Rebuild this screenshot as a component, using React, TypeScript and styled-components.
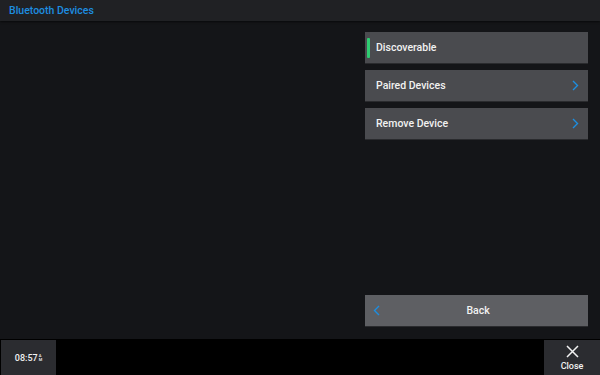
import { FC } from 'react'
import styled, { createGlobalStyle } from 'styled-components'

const colors = {
  header: '#202124',
  body: '#141518',
  footer: '#000000',
  button: '#4a4b4f',
  backButton: '#5e5f63',
  tile: '#2b2c30',
  blue: '#1d8ee0',
  green: '#2ecc71',
  text: '#f2f2f2',
}

const GlobalStyle = createGlobalStyle`
  html, body {
    margin: 0;
    padding: 0;
    background: ${colors.body};
  }
  * {
    box-sizing: border-box;
  }
`

interface MenuItem {
  name: string
  active?: boolean
  chevron?: boolean
}

const items: MenuItem[] = [
  { name: 'Discoverable', active: true },
  { name: 'Paired Devices', chevron: true },
  { name: 'Remove Device', chevron: true },
]

const ChevronRight: FC = () => (
  <svg width="7" height="11" viewBox="0 0 7 11">
    <path d="M1 1 L5.5 5.5 L1 10" fill="none" stroke={colors.blue} strokeWidth="1.4" />
  </svg>
)

const ChevronLeft: FC = () => (
  <svg width="7" height="11" viewBox="0 0 7 11">
    <path d="M6 1 L1.5 5.5 L6 10" fill="none" stroke={colors.blue} strokeWidth="1.4" />
  </svg>
)

const CloseIcon: FC = () => (
  <svg width="13" height="13" viewBox="0 0 13 13">
    <path d="M1 1 L12 12 M12 1 L1 12" stroke="#f2f2f2" strokeWidth="1.5" />
  </svg>
)

const App: FC = () => {
  return (
    <Screen>
      <GlobalStyle />
      <Header>
        <Title>Bluetooth Devices</Title>
      </Header>
      <Main>
        <Panel>
          <Menu>
            {items.map((item) => (
              <MenuButton key={item.name}>
                {item.active && <ActiveBar />}
                <Label>{item.name}</Label>
                {item.chevron && <ChevronRight />}
              </MenuButton>
            ))}
          </Menu>
          <BackButton>
            <ChevronLeft />
            <BackLabel>Back</BackLabel>
          </BackButton>
        </Panel>
      </Main>
      <Footer>
        <TimeTile>
          08:57
          <Meridiem>
            <span>A</span>
            <span>M</span>
          </Meridiem>
        </TimeTile>
        <CloseTile>
          <CloseIcon />
          <CloseText>Close</CloseText>
        </CloseTile>
      </Footer>
    </Screen>
  )
}

const Screen = styled.div`
  width: 600px;
  height: 375px;
  display: flex;
  flex-direction: column;
  background: ${colors.body};
  font-family: Roboto, 'Liberation Sans', sans-serif;
  overflow: hidden;
`

const Header = styled.div`
  height: 21px;
  display: flex;
  align-items: center;
  padding-left: 9px;
  background: ${colors.header};
  box-shadow: 0 1px 2px rgba(0, 0, 0, 0.6);
`

const Title = styled.div`
  color: ${colors.blue};
  font-size: 10.5px;
  font-weight: 500;
`

const Main = styled.div`
  flex: 1;
  display: flex;
  justify-content: flex-end;
  padding: 11px 12px 12px 0;
`

const Panel = styled.div`
  width: 223px;
  display: flex;
  flex-direction: column;
  justify-content: space-between;
`

const Menu = styled.div`
  display: flex;
  flex-direction: column;
  gap: 6px;
`

const MenuButton = styled.div`
  position: relative;
  height: 32px;
  display: flex;
  align-items: center;
  padding: 0 9px 0 11px;
  background: ${colors.button};
  border-bottom: 1px solid #2a2b2e;
`

const ActiveBar = styled.div`
  position: absolute;
  left: 2px;
  top: 6px;
  width: 3px;
  height: 20px;
  border-radius: 1px;
  background: ${colors.green};
`

const Label = styled.div`
  flex: 1;
  color: ${colors.text};
  font-size: 10.5px;
  font-weight: 500;
`

const BackButton = styled.div`
  height: 32px;
  display: flex;
  align-items: center;
  padding: 0 12px 0 8px;
  background: ${colors.backButton};
  border-bottom: 1px solid #2a2b2e;
`

const BackLabel = styled.div`
  flex: 1;
  text-align: center;
  color: ${colors.text};
  font-size: 10.5px;
  font-weight: 500;
`

const Footer = styled.div`
  height: 36px;
  display: flex;
  justify-content: space-between;
  align-items: flex-end;
  padding-left: 1px;
  background: ${colors.footer};
`

const TimeTile = styled.div`
  width: 55px;
  height: 35px;
  display: flex;
  align-items: center;
  justify-content: center;
  background: ${colors.tile};
  color: ${colors.text};
  font-size: 9px;
  font-weight: 500;
`

const Meridiem = styled.div`
  display: flex;
  flex-direction: column;
  margin-left: 1px;
  font-size: 4px;
  line-height: 4px;
`

const CloseTile = styled.div`
  width: 56px;
  height: 35px;
  display: flex;
  flex-direction: column;
  align-items: center;
  justify-content: center;
  gap: 3px;
  background: ${colors.tile};
`

const CloseText = styled.div`
  color: ${colors.text};
  font-size: 9px;
  font-weight: 500;
`

export default App
